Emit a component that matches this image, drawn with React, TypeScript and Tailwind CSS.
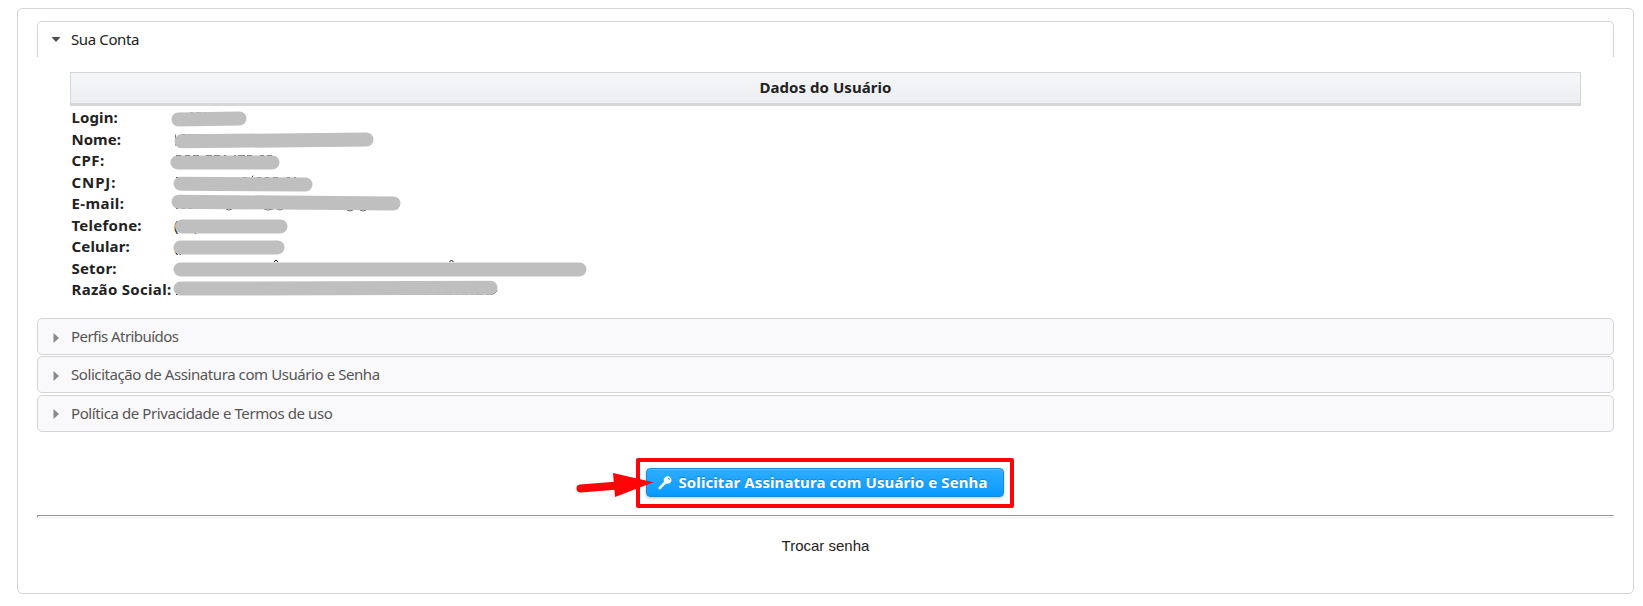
import React from "react";

const labels = [
  { text: "Login:", track: "tracking-[0.1px]" },
  { text: "Nome:", track: "tracking-[0px]" },
  { text: "CPF:", track: "tracking-[0.4px]" },
  { text: "CNPJ:", track: "tracking-[0.9px]" },
  { text: "E-mail:", track: "tracking-[0.4px]" },
  { text: "Telefone:", track: "tracking-[0.25px]" },
  { text: "Celular:", track: "tracking-[0.15px]" },
  { text: "Setor:", track: "tracking-[0.2px]" },
  { text: "Razão Social:", track: "tracking-[0.3px]" },
];

// Marker strokes hiding the personal values: x1, y1, x2, y2 of each centre line.
const strokes = [
  [8.5, 12.4, 69.5, 11.6],
  [11.5, 34.3, 196.5, 32.6],
  [7.5, 55.4, 102.5, 55.4],
  [10.5, 76.7, 135.5, 77.5],
  [8.5, 94.8, 223.5, 96.4],
  [12, 119.4, 110.5, 119.4],
  [10.5, 140.4, 107.5, 140.4],
  [10.5, 162.4, 409.5, 162.4],
  [10.5, 181.6, 320.5, 180.8],
];

const sections = [
  { title: "Perfis Atribuídos", gap: "mb-px", track: "tracking-[-0.55px]" },
  { title: "Solicitação de Assinatura com Usuário e Senha", gap: "mb-[2px]", track: "tracking-[-0.42px]" },
  { title: "Política de Privacidade e Termos de uso", gap: "pb-px", track: "tracking-[-0.41px]" },
];

function HiddenValues() {
  return (
    <svg width="430" height="194" viewBox="0 0 430 194" className="shrink-0 overflow-visible">
      <g stroke="#55595f" strokeWidth="1" fill="none">
        <path d="M20 5.500h3m3 0h5m3 0h5" opacity=".7" />
        <path d="M5.500 27.500v11M11 27.500h5m2 0h12m3 0h7m3 0h5m5 0h4" opacity=".8" />
        <path d="M6 48.500h5m4 0h5m3 0h6m7 0h6m2 0h6m4 0h2m8 0h2m2 0h7m2 0h5m8 0h4m3 0h5" />
        <path d="M6 70.500h3m64 0h4m5 0l1-2m4 2h4m4 0h4m4 0h5m9 0h3m4 0h2" />
        <path d="M6 101.500h2m4 0h3m3 0h5m3 0h2m3 0h3M56 102q3 2 6 0M94 102q4 2 9 0M107 102q3 2 6 0M177 103q3 2 6 0M190 103q3 2 6 0" />
        <path d="M6.500 158v2M6 187.500h2" stroke="#222" />
        <path d="M104 155l2-2 2 2M279.500 155l2-2 2 2" stroke="#111" />
        <path d="M245 187.500h4m3 0h7m5 0h6m3 0h8m4 0h3m4 0h5m4 0h3m2 0h7m3 0h3" opacity=".7" />
        <path d="M320 187.500q5 0 7-4" stroke="#16315a" />
      </g>
      <g className="font-['Noto_Sans',sans-serif] text-[15px]" fill="#222">
        <text x="4" y="123.500">(</text>
        <text x="24" y="123.500">)</text>
        <text x="4" y="144.500">(</text>
        <text x="7" y="144.500">(</text>
      </g>
      {strokes.map(([x1, y1, x2, y2], i) => (
        <line key={i} x1={x1} y1={y1} x2={x2} y2={y2} stroke="#bfbfbf" strokeWidth="14" strokeLinecap="round" />
      ))}
    </svg>
  );
}

export default function App() {
  return (
    <main className="h-[606px] bg-white pt-2 pl-[17px] font-['Noto_Sans','DejaVu_Sans',sans-serif] text-[15px] text-[#222]">
      <div className="flex h-[586px] w-[1617px] flex-col rounded-[5px] border border-[#d5d5d5] px-[19px] pt-3">
        <h3 className="flex h-9 shrink-0 items-center rounded-t-[5px] border border-b-0 border-[#d5d5d5] pl-[13px]">
          <svg width="10" height="6" viewBox="0 0 10 6"><path d="M.5 0h9L5 5z" fill="#4d4d4d" /></svg>
          <span className="ml-[10px] tracking-[-0.38px]">Sua Conta</span>
        </h3>
        <section className="mt-[15px] px-[33px]">
          <div className="flex h-[34px] items-center justify-center border border-b-[3px] border-[#d7d7d8] bg-linear-to-b from-[#f6f7f9] to-[#ebedf0] pb-[2px] font-bold">
            <span className="tracking-[0.06px]">Dados do Usuário</span>
          </div>
          <div className="flex h-[212px] pt-px">
            <div className="w-[100px] shrink-0 pl-[1.5px] font-bold">
              {labels.map((l) => (
                <div key={l.text} className={`h-[21.5px] leading-[21.5px] whitespace-nowrap ${l.track}`}>{l.text}</div>
              ))}
            </div>
            <HiddenValues />
          </div>
        </section>
        {sections.map((s) => (
          <h3 key={s.title} className={`flex h-[37px] shrink-0 items-center rounded-[5px] border border-[#d5d5d5] bg-[#f9f9fb] pl-[15px] text-[#555] ${s.gap}`}>
            <svg width="6" height="10" viewBox="0 0 6 10" className="mt-[2px]"><path d="M.5 0v10L6 5z" fill="#8a8a8a" /></svg>
            <span className={`ml-[12px] ${s.track}`}>{s.title}</span>
          </h3>
        ))}
        <div className="mt-[26px] flex justify-center pr-[2px]">
          <div className="relative flex h-[50px] w-[378px] items-center justify-center rounded-[2px] border-[4px] border-[#ff0307] pb-px">
            <button className="flex h-[29px] w-[358px] items-center rounded-[4px] border border-[#1b8ad9] bg-linear-to-b from-[#2cadff] to-[#0499ff] pl-[11px] font-bold text-white shadow-[0_1px_3px_rgba(0,0,0,0.25),inset_0_1px_0_#5cbcfa]">
              <svg width="14" height="14" viewBox="0 0 14 14" fill="none" className="shrink-0">
                <path fill="#f4fbff" fillRule="evenodd" d="M7 1.200C8.700-.1 11-.1 12.400 1.400c1.600 1.600 1.400 4-.1 5.400-1.200 1-2.700 1.200-4 .8L6.800 9l-1 .6-.6 1.200-1 .3-.6 1.200L2.500 13.200.7 13.200.5 11.400 6 5.700c-.5-1.600-.3-3.300 1-4.500zM9.800 2.400l1.600 1.600.7-.7-1.600-1.600z" />
              </svg>
              <span className="ml-[7px] whitespace-nowrap tracking-[0.09px] [text-shadow:0_-1px_1px_#1480cb]">Solicitar Assinatura com Usuário e Senha</span>
            </button>
            <svg className="absolute top-[10px] left-[-64px]" width="78" height="26" viewBox="0 0 78 26">
              <path d="M4.500 16.500L42 13.500" stroke="#ff0307" strokeWidth="8" strokeLinecap="round" />
              <path d="M37 1L77.500 10.200 39 25z" fill="#ff0307" />
            </svg>
          </div>
        </div>
        <hr className="mt-[7px] h-[3px] shrink-0 border border-t-[#929296] border-r-[#eee] border-b-[#ededed] border-l-[#929296]" />
        <div className="mt-[18px] text-center font-['Liberation_Sans',sans-serif] text-[15px] leading-5 text-[#222]">Trocar senha</div>
      </div>
    </main>
  );
}
